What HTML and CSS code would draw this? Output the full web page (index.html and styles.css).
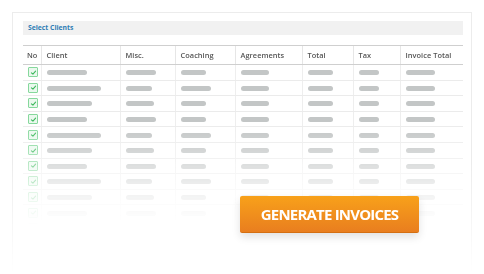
FILE: index.html
```html
<!DOCTYPE html>
<html lang="en">
<head>
    <meta charset="UTF-8">
    <meta name="viewport" content="width=device-width, initial-scale=1.0">
    <title>Generate Invoices</title>
    <link rel="stylesheet" href="styles.css">
</head>
<body>
    <div class="stage">
        <div class="card">
            <div class="select-bar">Select Clients</div>
            <table class="clients">
                <colgroup>
                    <col style="width: 18px">
                    <col style="width: 79px">
                    <col style="width: 55px">
                    <col style="width: 60px">
                    <col style="width: 67px">
                    <col style="width: 51px">
                    <col style="width: 47px">
                    <col style="width: 63px">
                </colgroup>
                <thead>
                    <tr>
                        <th>No</th>
                        <th>Client</th>
                        <th>Misc.</th>
                        <th>Coaching</th>
                        <th>Agreements</th>
                        <th>Total</th>
                        <th>Tax</th>
                        <th>Invoice Total</th>
                    </tr>
                </thead>
                <tbody id="rows"></tbody>
            </table>
        </div>
        <button class="generate">GENERATE INVOICES</button>
    </div>

    <script>
        const client = [40, 54, 45];
        const misc = [30, 26, 28];
        const coaching = [25, 30, 25];
        const tbody = document.getElementById("rows");

        function bar(width) {
            return '<td><span class="bar" style="width: ' + width + 'px"></span></td>';
        }

        for (let i = 0; i < 11; i++) {
            const k = i % 3;
            tbody.innerHTML +=
                '<tr>' +
                '<td><span class="check"><svg viewBox="0 0 10 10" width="7" height="7"><path d="M2 5.4 L4.2 7.4 L8 3" fill="none" stroke="#3cb85c" stroke-width="1.5" stroke-linecap="round" stroke-linejoin="round"/></svg></span></td>' +
                bar(client[k]) + bar(misc[k]) + bar(coaching[k]) +
                bar(28) + bar(25) + bar(20) + bar(29) +
                '</tr>';
        }
    </script>
</body>
</html>
```

FILE: styles.css
```css
body {
    margin: 0;
    background-color: #ffffff;
    font-family: "Open Sans", Arial, sans-serif;
}
.stage {
    position: relative;
    width: 484px;
    height: 274px;
    overflow: hidden;
}
.card {
    margin: 12px 12px 0 12px;
    height: 262px;
    box-sizing: border-box;
    padding: 8px 8px 0 10px;
    border: 1px solid #ececec;
    border-bottom: none;
    box-shadow: 0 0 6px rgba(0, 0, 0, 0.04);
    -webkit-mask-image: linear-gradient(to bottom, #000 0, #000 150px, transparent 262px);
    mask-image: linear-gradient(to bottom, #000 0, #000 150px, transparent 262px);
}
.select-bar {
    height: 14px;
    line-height: 14px;
    background-color: #f1f1f1;
    padding-left: 5px;
    font-size: 6.8px;
    font-weight: 700;
    color: #2f7db5;
    margin-bottom: 10px;
}
.clients {
    width: 440px;
    border-collapse: collapse;
    table-layout: fixed;
    -webkit-mask-image: linear-gradient(to bottom, #000 0, #000 78px, transparent 180px);
    mask-image: linear-gradient(to bottom, #000 0, #000 78px, transparent 180px);
}
.clients th {
    height: 18px;
    padding: 0 0 0 5px;
    text-align: left;
    font-size: 7.4px;
    font-weight: 600;
    letter-spacing: 0.05px;
    color: #555555;
    border-top: 1px solid #cfcfcf;
    border-bottom: 1px solid #cfcfcf;
    border-left: 1px solid #e6e6e6;
    white-space: nowrap;
}
.clients td {
    height: 14.6px;
    padding: 0 0 0 5px;
    border-bottom: 1px solid #ebebeb;
    border-left: 1px solid #eeeeee;
    line-height: 0;
}
.clients th:first-child {
    padding-left: 4px;
    border-left: none;
}
.clients td:first-child {
    border-left: none;
}
.bar {
    display: inline-block;
    height: 5px;
    border-radius: 3px;
    background-color: #c3c6c6;
}
.check {
    display: inline-flex;
    align-items: center;
    justify-content: center;
    width: 8px;
    height: 8px;
    border: 1px solid #86d89c;
    border-radius: 1px;
    background-color: #eaf8ee;
}
.generate {
    position: absolute;
    left: 240px;
    top: 196px;
    width: 179px;
    height: 37px;
    padding: 0;
    border: none;
    border-bottom: 1px solid #d46f12;
    border-radius: 2px;
    background: linear-gradient(to bottom, #f8a11a, #e97e1f);
    box-shadow: 0 4px 8px rgba(0, 0, 0, 0.12);
    color: #ffffff;
    font-family: "Open Sans", Arial, sans-serif;
    font-size: 15px;
    font-weight: 700;
    letter-spacing: -0.8px;
    cursor: pointer;
}
```
